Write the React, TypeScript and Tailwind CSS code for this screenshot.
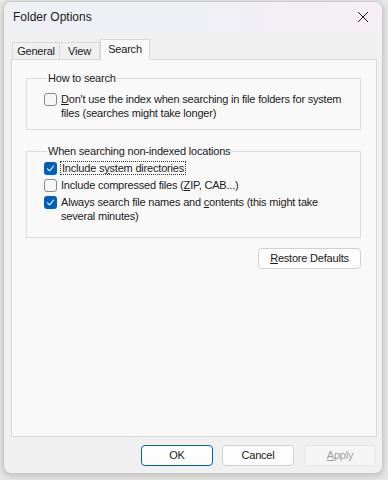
import React from "react";

const body = { fontFamily: '"Liberation Sans", Arial, sans-serif' };
const title = { fontFamily: '"Liberation Sans", Arial, sans-serif' };

function Check({ checked }: { checked?: boolean }) {
  if (checked) {
    return (
      <span className="flex h-[13px] w-[13px] shrink-0 items-center justify-center rounded-[3px] bg-[#005fb8]">
        <svg width="9" height="9" viewBox="0 0 9 9" fill="none">
          <path d="M1.5 4.8 L3.6 6.8 L7.6 2.2" stroke="#fff" strokeWidth="1.1" strokeLinecap="round" strokeLinejoin="round" />
        </svg>
      </span>
    );
  }
  return <span className="block h-[13px] w-[13px] shrink-0 rounded-[3px] border border-[#8a8a8a] bg-[#f6f6f6]" />;
}

function Row({ checked, children, mt }: { checked?: boolean; children: React.ReactNode; mt?: string }) {
  return (
    <div className={`flex items-start gap-[4px] ${mt ?? ""}`}>
      <span className="block pt-[1px]">
        <Check checked={checked} />
      </span>
      <div className="leading-[14px]">{children}</div>
    </div>
  );
}

function Group({ title, children, className }: { title: string; children: React.ReactNode; className?: string }) {
  return (
    <fieldset className={`border border-[#dcdcdc] pl-[17px] ${className ?? ""}`}>
      <legend className="ml-[3px] px-[1px] leading-[14px]">{title}</legend>
      {children}
    </fieldset>
  );
}

export default function App() {
  return (
    <div className="h-[480px] w-[388px] overflow-hidden bg-[#e6e6e6] pl-[3px] pt-[1px] text-[11px] tracking-[-0.2px] text-[#1a1a1a]" style={body}>
      <div className="flex h-[473px] w-[380px] flex-col overflow-hidden rounded-[8px] border border-[#c9c9c9] bg-[#f0f0f0] shadow-[0_2px_6px_rgba(0,0,0,0.18)]">
        {/* title bar */}
        <div className="flex h-[30px] shrink-0 items-center justify-between bg-gradient-to-r from-[#eef0f6] via-[#eff0f6] to-[#f6eef5] pl-[9px] pr-[13px]">
          <span className="text-[12px] tracking-normal" style={title}>Folder Options</span>
          <svg width="12" height="12" viewBox="0 0 12 12">
            <path d="M1 1 L11 11 M11 1 L1 11" stroke="#1a1a1a" strokeWidth="1" />
          </svg>
        </div>

        {/* tabs */}
        <div className="mt-[7px] flex items-end pl-[8px]">
          <div className="flex h-[17px] w-[48px] items-center justify-center border border-b-0 border-[#d9d9d9] bg-[#f0f0f0]">General</div>
          <div className="flex h-[17px] w-[40px] items-center justify-center border border-b-0 border-l-0 border-[#d9d9d9] bg-[#f0f0f0]">View</div>
          <div className="relative z-10 -mb-px flex h-[21px] w-[50px] items-center justify-center border border-b-0 border-[#d9d9d9] bg-[#f9f9f9] pb-[2px]">Search</div>
        </div>

        {/* panel */}
        <div className="ml-[7px] flex h-[378px] w-[366px] flex-col border border-[#d9d9d9] bg-[#f9f9f9] pl-[14px] pr-[15px] pt-[11px]">
          <Group title="How to search" className="h-[59px]">
            <Row mt="mt-[7px]">
              <span className="underline">D</span>on't use the index when searching in file folders for system
              <br />
              files (searches might take longer)
            </Row>
          </Group>

          <Group title="When searching non-indexed locations" className="mt-[14px] h-[94px]">
            <div className="mt-[3px] flex flex-col gap-[3px]">
              <Row checked>
                <span className="px-[1px] outline outline-1 outline-dotted outline-[#333]">
                  Include s<span className="underline">y</span>stem directories
                </span>
              </Row>
              <Row>
                Include compressed files (<span className="underline">Z</span>IP, CAB...)
              </Row>
              <Row checked>
                Always search file names and <span className="underline">c</span>ontents (this might take
                <br />
                several minutes)
              </Row>
            </div>
          </Group>

          <div className="mt-[10px] flex justify-end">
            <button className="h-[21px] w-[103px] rounded-[4px] border border-[#d0d0d0] bg-[#fdfdfd] leading-[19px]">
              <span className="underline">R</span>estore Defaults
            </button>
          </div>
        </div>

        {/* bottom buttons */}
        <div className="mt-[8px] flex justify-end gap-[9px] pr-[6px]">
          <button className="h-[21px] w-[72px] rounded-[4px] border border-[#005fb8] bg-[#fdfdfd] leading-[19px]">OK</button>
          <button className="h-[21px] w-[72px] rounded-[4px] border border-[#d0d0d0] bg-[#fdfdfd] leading-[19px]">Cancel</button>
          <button className="ml-[1px] h-[21px] w-[72px] rounded-[4px] border border-[#e5e5e5] bg-[#f5f5f5] leading-[19px] text-[#a0a0a0]">
            <span className="underline">A</span>pply
          </button>
        </div>
      </div>
    </div>
  );
}
